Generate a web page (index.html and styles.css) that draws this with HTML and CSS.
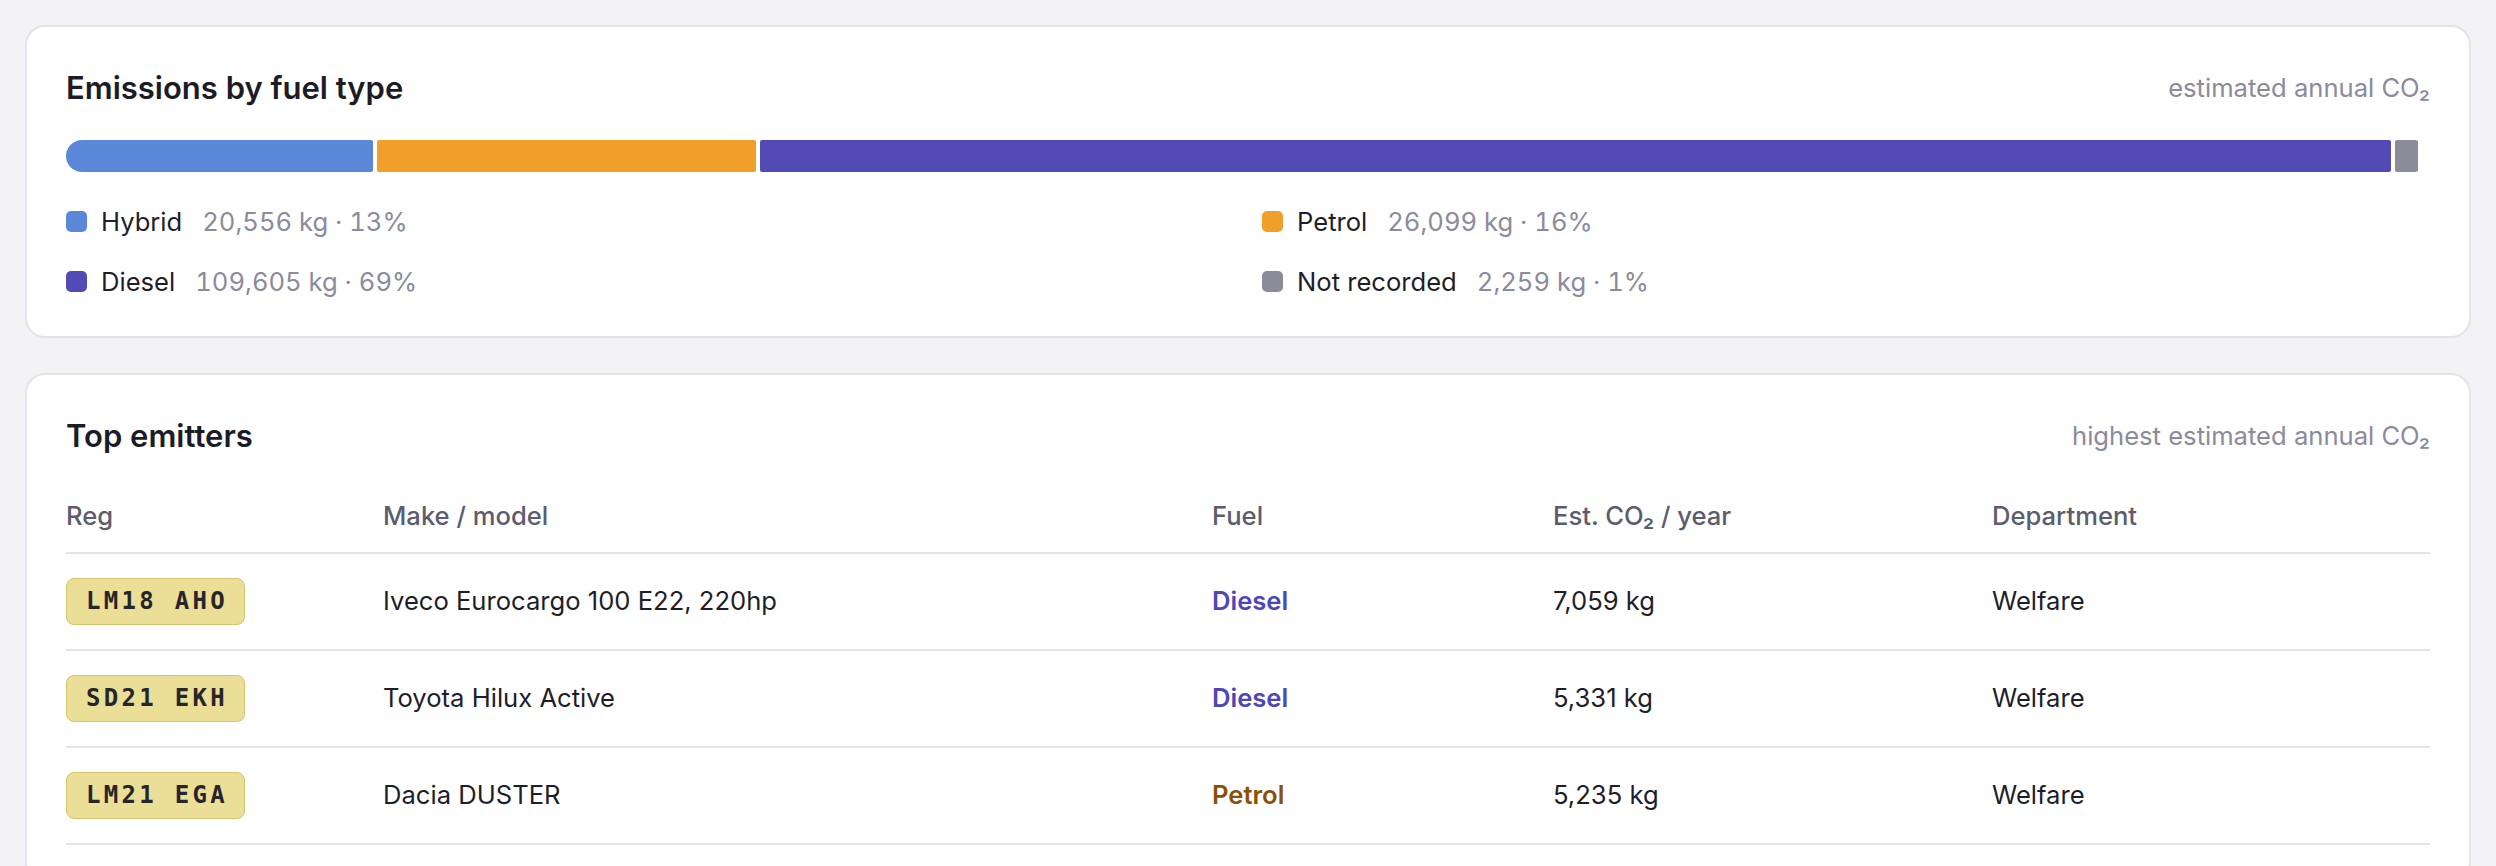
FILE: index.html
```html
<!DOCTYPE html>
<html lang="en">

<head>
    <meta charset="UTF-8">
    <meta name="viewport" content="width=device-width, initial-scale=1.0">
    <title>Fleet - Emissions</title>
    <link rel="stylesheet" href="styles.css">
</head>

<body>
    <div class="card">
        <div class="card-head">
            <h2>Emissions by fuel type</h2>
            <span class="hint">estimated annual CO₂</span>
        </div>

        <div class="fuel-bar">
            <div class="seg hybrid" style="width: 13%"></div>
            <div class="seg petrol" style="width: 16%"></div>
            <div class="seg diesel" style="width: 69%"></div>
            <div class="seg unknown" style="width: 1%"></div>
        </div>

        <div class="legend">
            <div class="legend-item">
                <span class="swatch hybrid"></span>
                <span class="legend-label">Hybrid</span>
                <span class="legend-value">20,556 kg · 13%</span>
            </div>
            <div class="legend-item">
                <span class="swatch petrol"></span>
                <span class="legend-label">Petrol</span>
                <span class="legend-value">26,099 kg · 16%</span>
            </div>
            <div class="legend-item">
                <span class="swatch diesel"></span>
                <span class="legend-label">Diesel</span>
                <span class="legend-value">109,605 kg · 69%</span>
            </div>
            <div class="legend-item">
                <span class="swatch unknown"></span>
                <span class="legend-label">Not recorded</span>
                <span class="legend-value">2,259 kg · 1%</span>
            </div>
        </div>
    </div>

    <div class="card">
        <div class="card-head">
            <h2>Top emitters</h2>
            <span class="hint">highest estimated annual CO₂</span>
        </div>

        <table class="emitters">
            <colgroup>
                <col class="col-reg">
                <col class="col-model">
                <col class="col-fuel">
                <col class="col-co2">
                <col>
            </colgroup>
            <thead>
                <tr>
                    <th>Reg</th>
                    <th>Make / model</th>
                    <th>Fuel</th>
                    <th>Est. CO₂ / year</th>
                    <th>Department</th>
                </tr>
            </thead>
            <tbody>
                <tr>
                    <td><span class="plate">LM18 AHO</span></td>
                    <td>Iveco Eurocargo 100 E22, 220hp</td>
                    <td class="fuel fuel-diesel">Diesel</td>
                    <td>7,059 kg</td>
                    <td>Welfare</td>
                </tr>
                <tr>
                    <td><span class="plate">SD21 EKH</span></td>
                    <td>Toyota Hilux Active</td>
                    <td class="fuel fuel-diesel">Diesel</td>
                    <td>5,331 kg</td>
                    <td>Welfare</td>
                </tr>
                <tr>
                    <td><span class="plate">LM21 EGA</span></td>
                    <td>Dacia DUSTER</td>
                    <td class="fuel fuel-petrol">Petrol</td>
                    <td>5,235 kg</td>
                    <td>Welfare</td>
                </tr>
            </tbody>
        </table>
    </div>
</body>

</html>
```

FILE: styles.css
```css
* {
    margin: 0;
    padding: 0;
    box-sizing: border-box;
}

body {
    background: #f3f3f5;
    padding: 25px;
    font-family: Inter, 'Noto Sans', sans-serif;
    font-size: 25.6px;
    color: #1e1e2a;
}

.card {
    background: white;
    border: 2px solid #e4e4e8;
    border-radius: 20px;
    padding: 39px 39px 36px;
}

.card + .card {
    margin-top: 35px;
}

.card-head {
    display: flex;
    justify-content: space-between;
    align-items: center;
    height: 42px;
}

h2 {
    font-size: 31px;
    font-weight: 600;
    color: #1c1c27;
}

.hint {
    color: #8b8b9b;
    font-size: 25.6px;
}

/* stacked bar */
.fuel-bar {
    display: flex;
    gap: 4px;
    height: 32px;
    margin-top: 32px;
    border-radius: 16px;
    overflow: hidden;
}

.seg {
    flex: none;
    height: 100%;
    border-radius: 2px;
}

.hybrid {
    background: #5b87d9;
}

.petrol {
    background: #f0a02a;
}

.diesel {
    background: #524bb5;
}

.unknown {
    background: #8b8b99;
}

.legend {
    display: grid;
    grid-template-columns: 1fr 1fr;
    column-gap: 28px;
    row-gap: 22px;
    margin-top: 30px;
}

.legend-item {
    display: flex;
    align-items: center;
    height: 38px;
}

.swatch {
    width: 21px;
    height: 21px;
    border-radius: 5px;
    margin-right: 14px;
}

.legend-value {
    color: #8b8b9b;
    margin-left: 20px;
    font-variant-numeric: tabular-nums;
}

/* table */
.emitters {
    width: 100%;
    table-layout: fixed;
    border-collapse: collapse;
    margin-top: 23px;
}

.col-reg {
    width: 317px;
}

.col-model {
    width: 829px;
}

.col-fuel {
    width: 341px;
}

.col-co2 {
    width: 439px;
}

.emitters th {
    text-align: left;
    font-weight: 500;
    color: #5c5c6f;
    line-height: 38px;
    padding: 18px 0 17px;
    border-bottom: 2px solid #e4e4e8;
}

.emitters td {
    height: 97px;
    padding: 0;
    line-height: 1.2;
    vertical-align: middle;
    border-bottom: 2px solid #e4e4e8;
}

.fuel {
    font-weight: 600;
}

.fuel-diesel {
    color: #4e47b8;
}

.fuel-petrol {
    color: #8a5208;
}

.plate {
    display: inline-block;
    font-family: 'DejaVu Sans Mono', monospace;
    font-weight: bold;
    font-size: 24px;
    letter-spacing: 3.3px;
    line-height: 45px;
    padding: 0 16px 0 19px;
    background: #ebde97;
    border: 1.5px solid #d5c46e;
    border-radius: 8px;
    color: #26262a;
    vertical-align: middle;
}
```
